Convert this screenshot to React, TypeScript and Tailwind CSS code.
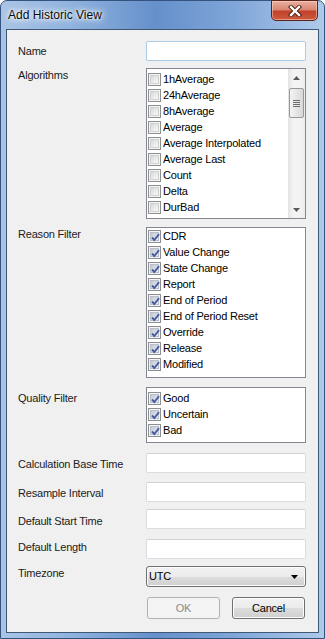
import React from 'react';

const algorithms = ['1hAverage', '24hAverage', '8hAverage', 'Average', 'Average Interpolated', 'Average Last', 'Count', 'Delta', 'DurBad'];
const reasons = ['CDR', 'Value Change', 'State Change', 'Report', 'End of Period', 'End of Period Reset', 'Override', 'Release', 'Modified'];
const qualities = ['Good', 'Uncertain', 'Bad'];

function CheckBox({ checked }: { checked?: boolean }) {
  return (
    <span className="relative block w-[13px] h-[13px] shrink-0 border border-[#8e8f8f] bg-[#f4f4f4] p-[1px]">
      <span className={checked
        ? 'block w-full h-full border border-[#b9bfcc] bg-[linear-gradient(135deg,#c4cad6,#e9ecf2)]'
        : 'block w-full h-full border border-[#d0d0d0] bg-[linear-gradient(135deg,#d9d9d9,#f8f8f8)]'} />
      {checked && (
        <svg className="absolute left-[1px] top-[1px]" width="11" height="11" viewBox="0 0 11 11">
          <path d="M2 5.5 L4.3 8 L9 2.2" fill="none" stroke="#4a5d9c" strokeWidth="1.9" strokeLinejoin="miter" />
        </svg>
      )}
    </span>
  );
}

function CheckRow({ text, checked, pad }: { text: string; checked?: boolean; pad: string }) {
  return (
    <div className={`flex items-center h-[16px] gap-[2px] ${pad}`}>
      <CheckBox checked={checked} />
      <span className="text-black whitespace-nowrap">{text}</span>
    </div>
  );
}

function Row({ label, top, labelTop, children }: { label: string; top: string; labelTop: string; children: React.ReactNode }) {
  return (
    <div className={`flex ${top}`}>
      <div className={`w-[128px] shrink-0 leading-[14px] text-[#1b1b1b] ${labelTop}`}>{label}</div>
      <div className="w-[160px]">{children}</div>
    </div>
  );
}

function TextBox({ focus }: { focus?: boolean }) {
  return (
    <div className={focus
      ? 'h-[20px] bg-white rounded-[2px] border border-[#a9cde8]'
      : 'h-[20px] bg-white rounded-[2px] border border-[#d9dde2] border-t-[#cfd2d6]'} />
  );
}

function ScrollArrow({ down }: { down?: boolean }) {
  return (
    <div className="h-[17px] flex items-center justify-center">
      <svg width="7" height="4" viewBox="0 0 7 4">
        <polygon points={down ? '0,0 7,0 3.5,4' : '0,4 7,4 3.5,0'} fill="#5b5b5b" />
      </svg>
    </div>
  );
}

export default function App() {
  return (
    <div className="w-[325px] h-[639px] relative flex flex-col border border-[#34547e] rounded-t-[7px] px-[5px] pb-[5px] bg-[linear-gradient(90deg,#a9c4e6_0%,#8fb2de_22%,#6690cb_48%,#7fa5d8_72%,#aecaea_100%)] font-['Liberation_Sans',Arial,sans-serif] text-[11px] tracking-[-0.2px]">
      {/* title bar */}
      <div className="h-[28px] shrink-0 flex items-center pl-[2px]">
        <span className="text-[12px] tracking-normal text-[#0b0b0b] [text-shadow:0_0_6px_#ffffff,0_0_10px_#ffffff,0_0_3px_#ffffff]">Add Historic View</span>
      </div>
      <div className="absolute top-[-1px] right-[6px] w-[47px] h-[21px] rounded-b-[5px] border border-[#5b2418] bg-[linear-gradient(180deg,#eab0a1_0%,#d98672_45%,#c2412a_55%,#cc5a3e_100%)] flex items-center justify-center shadow-[inset_0_0_0_1px_rgba(255,220,210,0.5)]">
        <svg width="14" height="12" viewBox="0 0 14 12">
          <path d="M3 2 L11 10 M11 2 L3 10" stroke="#4a1d14" strokeWidth="4.2" strokeLinecap="square" />
          <path d="M3 2 L11 10 M11 2 L3 10" stroke="#ffffff" strokeWidth="2.4" strokeLinecap="square" />
        </svg>
      </div>

      {/* client area */}
      <div className="flex-1 border border-[#3f5878] bg-[#f0f0f0] pl-[11px] pt-[11px] flex flex-col">
        <Row label="Name" top="" labelTop="pt-[3px]">
          <TextBox focus />
        </Row>

        <Row label="Algorithms" top="mt-[7px]" labelTop="pt-0">
          <div className="h-[151px] bg-white border border-[#828790] flex">
            <div className="flex-1 pt-[2px] overflow-hidden">
              {algorithms.map((a) => (
                <CheckRow key={a} text={a} pad="pl-[1px]" />
              ))}
            </div>
            <div className="w-[17px] h-full bg-[linear-gradient(90deg,#e3e3e3,#f3f3f3_30%,#f3f3f3_70%,#ececec)] flex flex-col">
              <ScrollArrow />
              <div className="mx-[1px] mt-[2px] h-[30px] rounded-[2px] border border-[#989898] bg-[linear-gradient(90deg,#f4f4f4,#e6e6e6_50%,#d8d8d8)] flex flex-col items-center justify-center gap-[1px]">
                <span className="block w-[7px] h-[1px] bg-[#6e6e6e]" />
                <span className="block w-[7px] h-[1px] bg-[#6e6e6e]" />
                <span className="block w-[7px] h-[1px] bg-[#6e6e6e]" />
                <span className="block w-[7px] h-[1px] bg-[#6e6e6e]" />
              </div>
              <div className="flex-1" />
              <ScrollArrow down />
            </div>
          </div>
        </Row>

        <Row label="Reason Filter" top="mt-[8px]" labelTop="pt-0">
          <div className="h-[151px] bg-white border border-[#828790]">
            {reasons.map((r) => (
              <CheckRow key={r} text={r} checked pad="pl-[1px]" />
            ))}
          </div>
        </Row>

        <Row label="Quality Filter" top="mt-[9px]" labelTop="pt-[4px]">
          <div className="h-[56px] bg-white border border-[#828790] pt-[2px]">
            {qualities.map((q) => (
              <CheckRow key={q} text={q} checked pad="pl-[1px]" />
            ))}
          </div>
        </Row>

        <Row label="Calculation Base Time" top="mt-[10px]" labelTop="pt-[4px]">
          <TextBox />
        </Row>
        <Row label="Resample Interval" top="mt-[9px]" labelTop="pt-[4px]">
          <TextBox />
        </Row>
        <Row label="Default Start Time" top="mt-[7px]" labelTop="pt-[5px]">
          <TextBox />
        </Row>
        <Row label="Default Length" top="mt-[10px]" labelTop="pt-[1px]">
          <TextBox />
        </Row>
        <Row label="Timezone" top="mt-[7px]" labelTop="pt-0">
          <div className="h-[21px] rounded-[3px] border border-[#707070] bg-[linear-gradient(180deg,#f2f2f2_0%,#ebebeb_50%,#dddddd_51%,#cfcfcf_100%)] flex items-center pl-[2px] pr-[7px] shadow-[inset_0_0_0_1px_#fcfcfc]">
            <span className="flex-1 text-black">UTC</span>
            <svg width="7" height="4" viewBox="0 0 7 4">
              <polygon points="0,0 7,0 3.5,4" fill="#000" />
            </svg>
          </div>
        </Row>

        <div className="flex mt-[10px] pl-[129px] gap-[12px]">
          <button className="w-[73px] h-[22px] rounded-[3px] border border-[#adb2b5] bg-[#f4f4f4] text-[#8a8a8a]">OK</button>
          <button className="w-[73px] h-[22px] rounded-[3px] border border-[#707070] bg-[linear-gradient(180deg,#f2f2f2_0%,#ebebeb_50%,#dddddd_51%,#cfcfcf_100%)] text-black shadow-[inset_0_0_0_1px_#fcfcfc]">Cancel</button>
        </div>
      </div>
    </div>
  );
}
